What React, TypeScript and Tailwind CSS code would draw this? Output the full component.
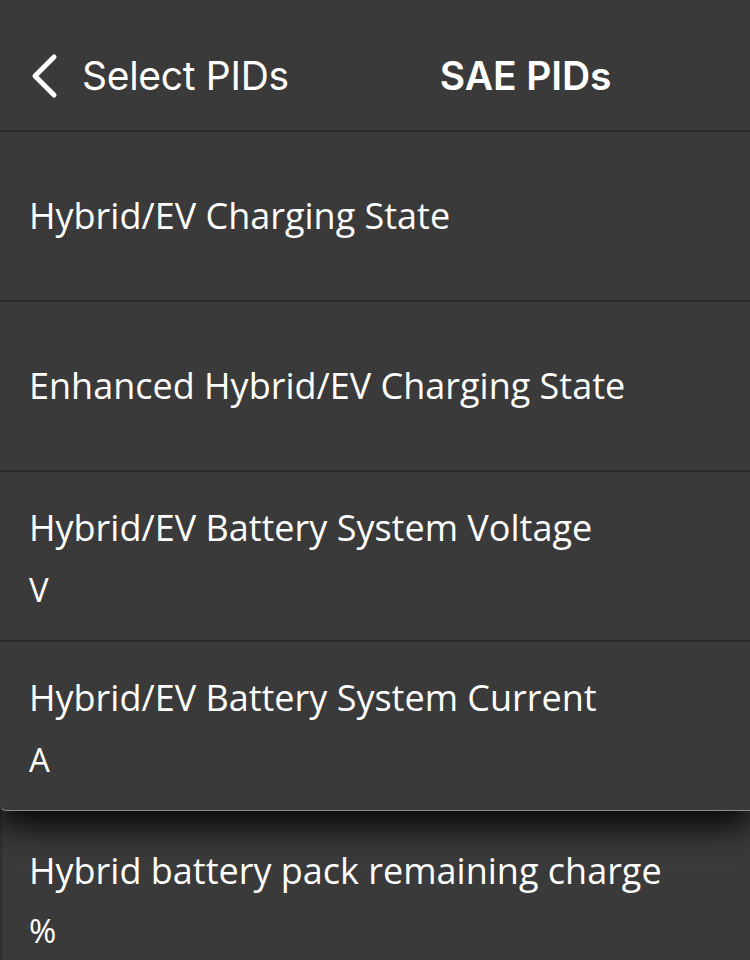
import React from 'react';

type Pid = {
  name: string;
  unit?: string;
};

const pids: Pid[] = [
  { name: 'Hybrid/EV Charging State' },
  { name: 'Enhanced Hybrid/EV Charging State' },
  { name: 'Hybrid/EV Battery System Voltage', unit: 'V' },
  { name: 'Hybrid/EV Battery System Current', unit: 'A' },
];

function PidRow({ pid }: { pid: Pid }) {
  return (
    <div
      className={`h-[170px] flex flex-col pl-[29px] border-t-[2px] border-[#2a2a2a] ${
        pid.unit ? 'pt-[34px]' : 'pt-[62px]'
      }`}
    >
      <span className="text-[36px] leading-[44px] text-white">{pid.name}</span>
      {pid.unit && <span className="text-[33px] leading-[40px] mt-[20px] text-white">{pid.unit}</span>}
    </div>
  );
}

export default function App() {
  return (
    <div
      className="w-[750px] h-[960px] overflow-hidden bg-[#3a3a3a]"
      style={{ fontFamily: '"Open Sans", "Noto Sans", sans-serif' }}
    >
      {/* top sheet */}
      <div className="relative z-10 bg-[#3a3a3a] rounded-bl-[6px] border-b border-[#8c8c8c] shadow-[0_14px_34px_rgba(0,0,0,0.95)]">
        <div
          className="h-[130px] flex items-start pt-[56px]"
          style={{ fontFamily: 'Inter, "Liberation Sans", sans-serif' }}
        >
          <svg width="30" height="46" viewBox="0 0 30 46" className="ml-[29px] -mt-[3px]">
            <path
              d="M25 4 L6 23 L25 42"
              fill="none"
              stroke="white"
              strokeWidth="5"
              strokeLinecap="round"
              strokeLinejoin="round"
            />
          </svg>
          <span className="ml-[23px] text-[39px] leading-[39px] text-white tracking-[-0.3px]">Select PIDs</span>
          <span className="ml-[151px] text-[39px] leading-[39px] font-semibold text-white tracking-[-0.1px]">
            SAE PIDs
          </span>
        </div>
        {pids.map((p) => (
          <PidRow key={p.name} pid={p} />
        ))}
      </div>

      {/* underlying row */}
      <div className="h-[160px] border-l-[2px] border-[#303030] pl-[27px] pt-[38px] flex flex-col">
        <span className="text-[36px] leading-[44px] text-white">Hybrid battery pack remaining charge</span>
        <span className="text-[33px] leading-[40px] mt-[18px] text-white">%</span>
      </div>
    </div>
  );
}
